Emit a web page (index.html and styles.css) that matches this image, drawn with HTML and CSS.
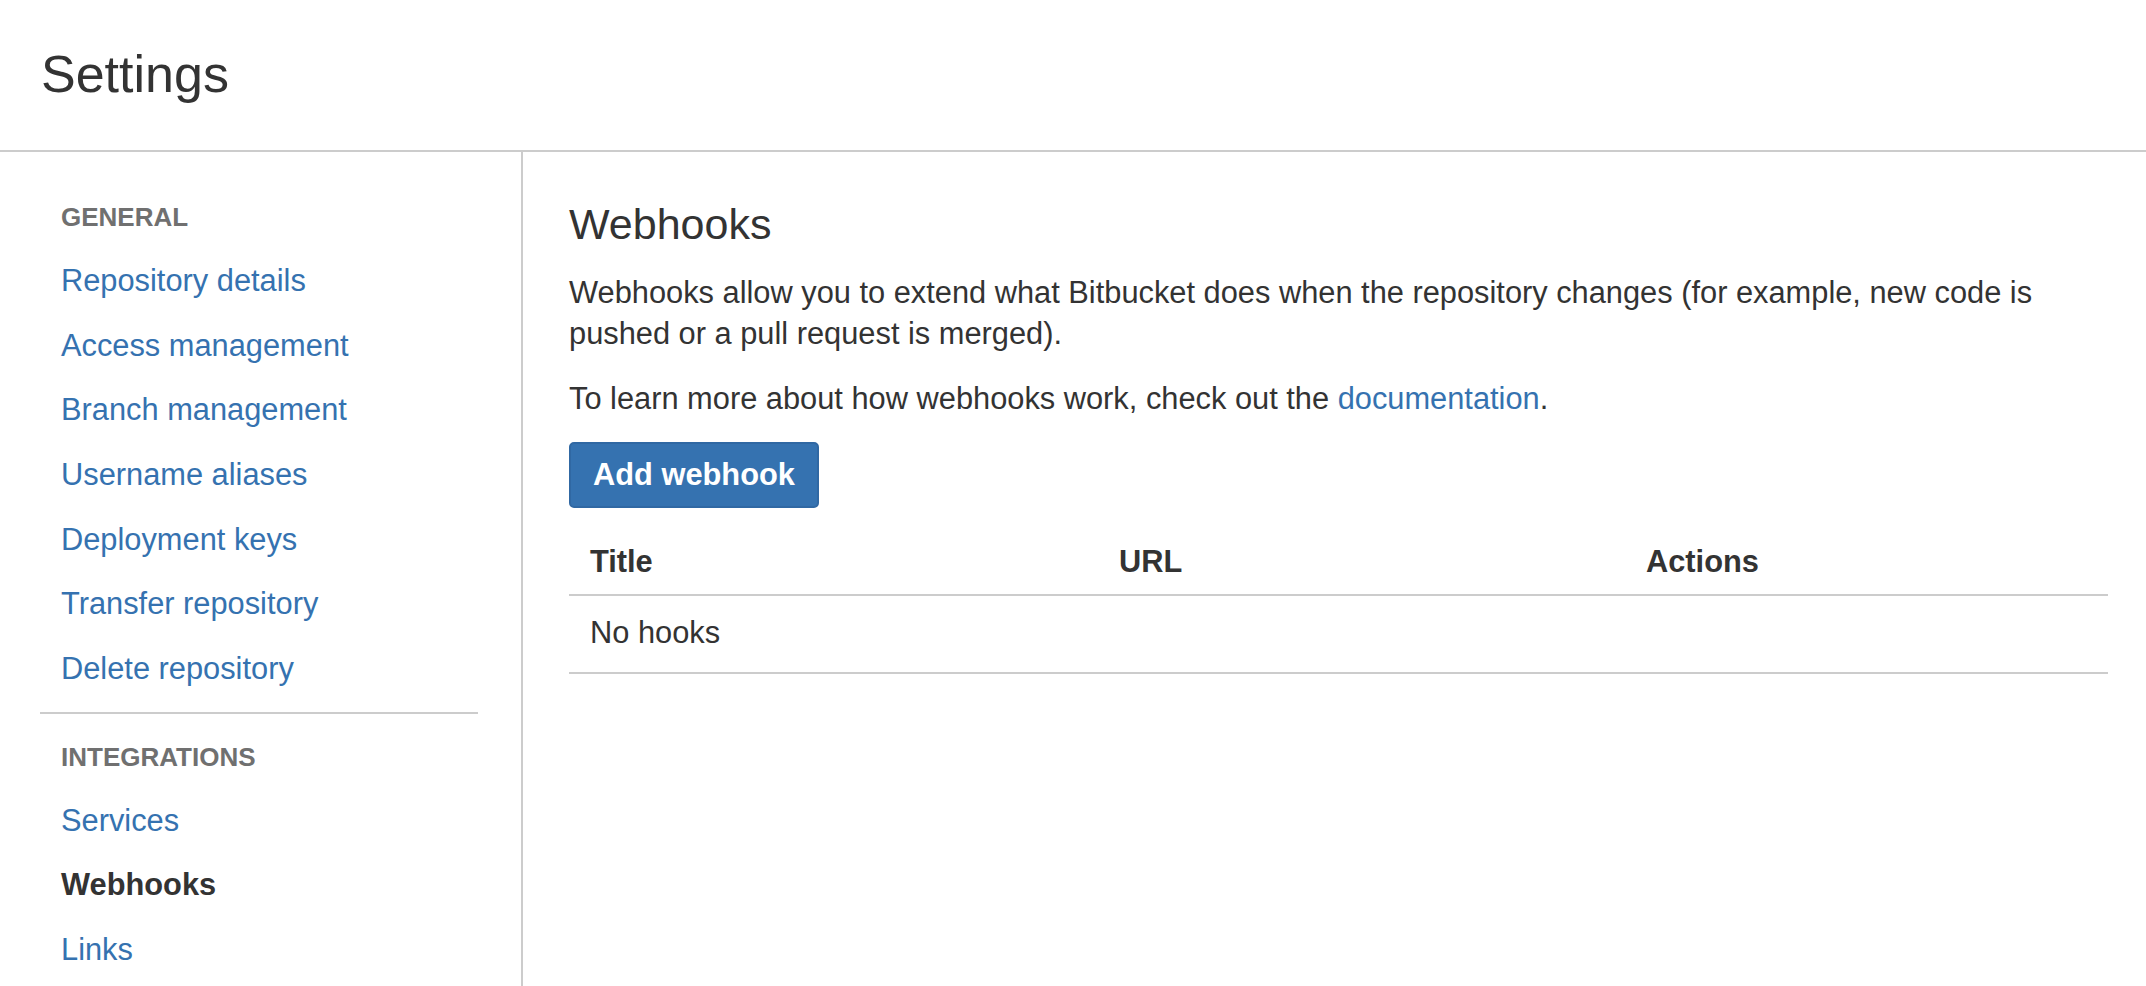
FILE: index.html
```html
<!DOCTYPE html>
<html lang="en">
<head>
<meta charset="utf-8">
<title>Settings - Webhooks</title>
<link rel="stylesheet" href="styles.css">
</head>
<body>
<header class="page-header">
  <h1 class="page-title">Settings</h1>
</header>
<div class="layout">
  <nav class="sidebar">
    <h3 class="nav-heading">GENERAL</h3>
    <ul class="nav-list">
      <li><a class="nav-link" href="#">Repository details</a></li>
      <li><a class="nav-link" href="#">Access management</a></li>
      <li><a class="nav-link" href="#">Branch management</a></li>
      <li><a class="nav-link" href="#">Username aliases</a></li>
      <li><a class="nav-link" href="#">Deployment keys</a></li>
      <li><a class="nav-link" href="#">Transfer repository</a></li>
      <li><a class="nav-link" href="#">Delete repository</a></li>
    </ul>
    <hr class="nav-divider">
    <h3 class="nav-heading">INTEGRATIONS</h3>
    <ul class="nav-list">
      <li><a class="nav-link" href="#">Services</a></li>
      <li><a class="nav-link is-active" href="#">Webhooks</a></li>
      <li><a class="nav-link" href="#">Links</a></li>
    </ul>
  </nav>
  <main class="content">
    <h2 class="content-title">Webhooks</h2>
    <p class="content-text">Webhooks allow you to extend what Bitbucket does when the repository changes (for example, new code is pushed or a pull request is merged).</p>
    <p class="content-text">To learn more about how webhooks work, check out the <a class="text-link" href="#">documentation</a>.</p>
    <button class="btn-primary" type="button">Add webhook</button>
    <table class="hooks-table">
      <colgroup>
        <col class="col-title">
        <col class="col-url">
        <col>
      </colgroup>
      <thead>
        <tr>
          <th>Title</th>
          <th>URL</th>
          <th>Actions</th>
        </tr>
      </thead>
      <tbody>
        <tr>
          <td colspan="3">No hooks</td>
        </tr>
      </tbody>
    </table>
  </main>
</div>
</body>
</html>
```

FILE: styles.css
```css
* {
  box-sizing: border-box;
}

html, body {
  margin: 0;
  padding: 0;
  background: #ffffff;
}

body {
  font-family: "Liberation Sans", Arial, Helvetica, sans-serif;
  color: #333333;
  font-size: 30.8px;
  line-height: 41px;
  min-height: 100vh;
  display: flex;
  flex-direction: column;
}

/* Header */
.page-header {
  height: 152px;
  padding: 44px 38px 0 41px;
  border-bottom: 2px solid #cccccc;
}

.page-title {
  margin: 0;
  font-size: 52px;
  line-height: 60px;
  font-weight: normal;
  color: #333333;
}

/* Layout */
.layout {
  flex: 1;
  display: flex;
}

.sidebar {
  width: 523px;
  flex: 0 0 523px;
  border-right: 2px solid #cccccc;
  padding: 50px 43px 0 40px;
}

.nav-heading {
  margin: 0 0 17px;
  font-size: 26px;
  line-height: 30px;
  font-weight: bold;
  color: #707070;
  padding-left: 21px;
}

.nav-list {
  list-style: none;
  margin: 0;
  padding: 0;
}

.nav-link {
  display: block;
  padding-left: 21px;
  line-height: 64.67px;
  color: #3572b0;
  text-decoration: none;
  white-space: nowrap;
}

.nav-link.is-active {
  color: #333333;
  font-weight: bold;
}

.nav-divider {
  margin: 10px 0 28px;
  border: 0;
  border-top: 2px solid #cccccc;
  height: 0;
}

/* Content */
.content {
  flex: 1;
  min-width: 0;
  padding: 47px 38px 0 46px;
}

.content-title {
  margin: 0 0 23px;
  font-size: 43px;
  line-height: 50px;
  font-weight: normal;
  color: #333333;
}

.content-text {
  margin: 0 0 23.5px;
  line-height: 41px;
}

.text-link {
  color: #3572b0;
  text-decoration: none;
}

.btn-primary {
  display: block;
  height: 66px;
  margin: 0;
  padding: 0 22px;
  font-family: inherit;
  font-size: 30.8px;
  line-height: 62px;
  font-weight: bold;
  color: #ffffff;
  background: #3572b0;
  border: 2px solid #3068a3;
  border-radius: 5px;
  cursor: pointer;
}

.hooks-table {
  width: 100%;
  margin-top: 21px;
  border-collapse: collapse;
  table-layout: fixed;
}

.col-title {
  width: 529px;
}

.col-url {
  width: 527px;
}

.hooks-table th {
  text-align: left;
  font-weight: bold;
  padding: 12px 21px 12px;
  line-height: 41px;
  border-bottom: 2px solid #cccccc;
}

.hooks-table td {
  padding: 16px 21px 19px;
  line-height: 41px;
  border-bottom: 2px solid #cccccc;
}
```
